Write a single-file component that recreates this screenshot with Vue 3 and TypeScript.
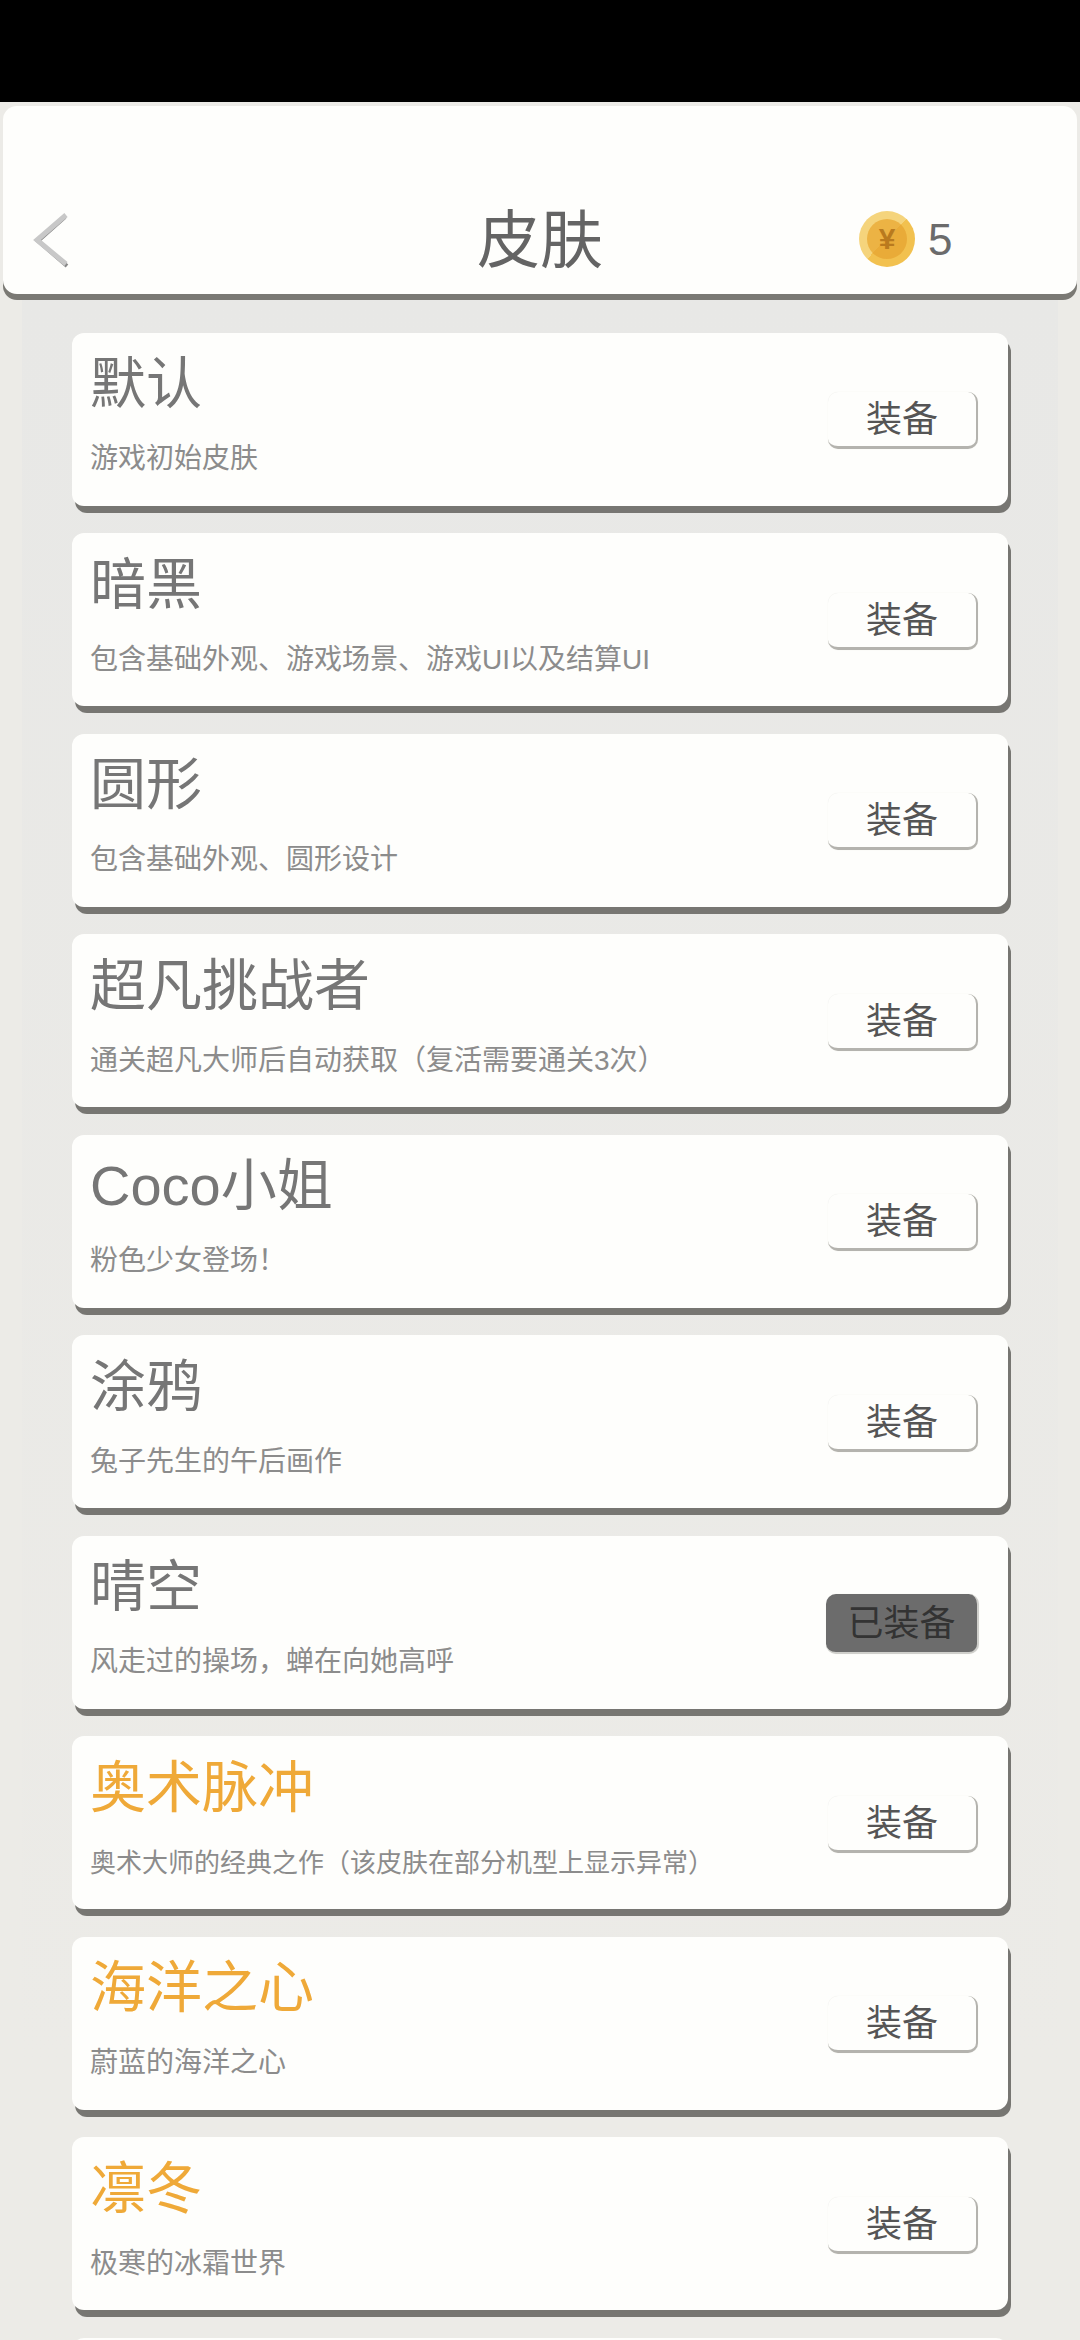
<script setup lang="ts">
interface Skin {
  name: string;
  desc: string;
  rare?: boolean;
  equipped?: boolean;
  smallDesc?: boolean;
}

const skins: Skin[] = [
  { name: "默认", desc: "游戏初始皮肤" },
  { name: "暗黑", desc: "包含基础外观、游戏场景、游戏UI以及结算UI" },
  { name: "圆形", desc: "包含基础外观、圆形设计" },
  { name: "超凡挑战者", desc: "通关超凡大师后自动获取（复活需要通关3次）" },
  { name: "Coco小姐", desc: "粉色少女登场！" },
  { name: "涂鸦", desc: "兔子先生的午后画作" },
  { name: "晴空", desc: "风走过的操场，蝉在向她高呼", equipped: true },
  { name: "奥术脉冲", desc: "奥术大师的经典之作（该皮肤在部分机型上显示异常）", rare: true, smallDesc: true },
  { name: "海洋之心", desc: "蔚蓝的海洋之心", rare: true },
  { name: "凛冬", desc: "极寒的冰霜世界", rare: true },
];
</script>

<template>
  <div class="screen">
    <div class="status"></div>
    <header class="topbar">
      <div class="back">
        <svg width="44" height="60" viewBox="0 0 44 60" fill="none">
          <polyline points="34,7 7,31 36,56" stroke="#6a6a6a" stroke-width="4" opacity="0.8" />
          <polyline points="35,5 6,30 35,54" stroke="#c8c8c8" stroke-width="5" />
        </svg>
      </div>
      <h1 class="title">皮肤</h1>
      <div class="wallet">
        <div class="coin">
          <div class="coin-inner">¥</div>
        </div>
        <span class="count">5</span>
      </div>
    </header>

    <main class="list">
      <section v-for="skin in skins" :key="skin.name" class="card">
        <div class="info">
          <div class="name" :class="{ rare: skin.rare }">{{ skin.name }}</div>
          <div class="desc" :class="{ small: skin.smallDesc }">{{ skin.desc }}</div>
        </div>
        <button class="equip" :class="{ on: skin.equipped }">
          {{ skin.equipped ? "已装备" : "装备" }}
        </button>
      </section>
      <section class="card"></section>
    </main>
  </div>
</template>

<style>
html,
body {
  margin: 0;
  background: #ecebe7;
}
</style>

<style scoped>
.screen {
  width: 1080px;
  height: 2340px;
  overflow: hidden;
  background: #ecebe7;
  font-family: "Liberation Sans", "Noto Sans CJK SC", sans-serif;
}

.status {
  height: 102px;
  background: #000;
}

.topbar {
  position: relative;
  z-index: 1;
  display: grid;
  grid-template-columns: 1fr auto 1fr;
  align-items: center;
  box-sizing: border-box;
  height: 188px;
  margin: 4px 3px 0;
  padding-top: 80px;
  background: #fefefc;
  border-radius: 14px;
  box-shadow: 0 6px 0 #7a7974;
}

.back {
  display: flex;
  padding-left: 28px;
}

.title {
  margin: 0;
  font-size: 63px;
  font-weight: 400;
  line-height: 90px;
  color: #646464;
}

.wallet {
  display: flex;
  align-items: center;
  gap: 13px;
  padding-left: 256px;
}

.coin {
  display: flex;
  align-items: center;
  justify-content: center;
  width: 56px;
  height: 56px;
  margin-bottom: 2px;
  border-radius: 50%;
  background: linear-gradient(135deg, #f5d47c 50%, #f2c14f 50%);
}

.coin-inner {
  width: 40px;
  height: 40px;
  border-radius: 50%;
  background: linear-gradient(135deg, #ecb344 50%, #e9ab38 50%);
  color: #b97a1e;
  font-size: 30px;
  font-weight: 700;
  line-height: 40px;
  text-align: center;
}

.count {
  font-size: 44px;
  color: #6b6b6b;
}

.list {
  display: flex;
  flex-direction: column;
  gap: 27.5px;
  height: 2040px;
  margin: 0 22px;
  padding: 38.5px 50px 0;
  background: linear-gradient(#e8e8e6, #ecebe7 85%);
}

.card {
  display: flex;
  flex: none;
  align-items: center;
  justify-content: space-between;
  box-sizing: border-box;
  height: 173px;
  padding: 0 32px 0 18px;
  background: #fefefc;
  border-radius: 12px;
  box-shadow: 3px 7px 0 #777672;
}

.info {
  display: flex;
  flex-direction: column;
  gap: 17px;
  padding-bottom: 11px;
}

.name {
  font-size: 56px;
  line-height: 74px;
  color: #767676;
}

.name.rare {
  color: #efa938;
}

.desc {
  font-size: 28px;
  line-height: 42px;
  color: #8c8c8c;
}

.desc.small {
  font-size: 26px;
}

.equip {
  box-sizing: content-box;
  width: 148px;
  height: 53px;
  margin: 3px -2px 0 0;
  padding: 1px 0 0;
  border: 0;
  border-right: 2px solid #b4b3ae;
  border-bottom: 3px solid #b4b3ae;
  border-radius: 10px;
  background: #fefefc;
  box-shadow: 0 0 1px #e6e6e2;
  color: #555;
  font-family: inherit;
  font-size: 36px;
  line-height: 53px;
}

.equip.on {
  width: 151px;
  height: 57px;
  margin-right: -3px;
  border-right: 2px solid #cfcfcb;
  border-bottom: 2px solid #cfcfcb;
  background: #6c6c6c;
  color: #333;
}
</style>
